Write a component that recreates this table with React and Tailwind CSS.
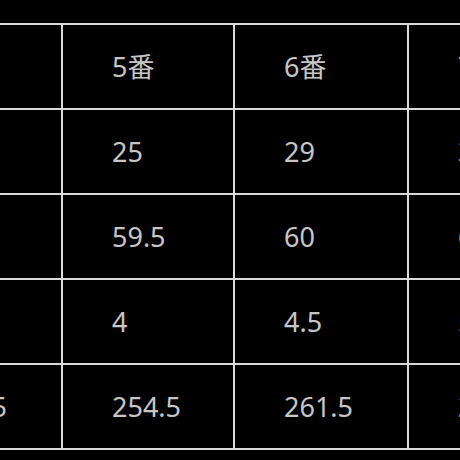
import React from "react";

const header = ["4番", "5番", "6番", "7番"];
const rows = [
  ["20", "25", "29", "33"],
  ["59", "59.5", "60", "60.5"],
  ["3.5", "4", "4.5", "5"],
  ["247.5", "254.5", "261.5", "268.5"],
];

export default function App() {
  return (
    <div
      className="w-[460px] h-[460px] bg-black overflow-hidden pt-[23px]"
      style={{ fontFamily: '"Noto Sans", "Noto Sans CJK JP", sans-serif' }}
    >
      {/* spec table, scrolled sideways */}
      <table className="table-fixed border-collapse w-[694px] min-w-[694px] ml-[-113px] text-[27px] text-[#c6c6c6]">
        <colgroup>
          <col className="w-[174px]" />
          <col className="w-[172px]" />
          <col className="w-[174px]" />
          <col className="w-[174px]" />
        </colgroup>
        <thead>
          <tr>
            {header.map((h) => (
              <th
                key={h}
                className="h-[85px] border-2 border-[#dadada] pl-[49px] text-left font-normal leading-none"
              >
                {h}
              </th>
            ))}
          </tr>
        </thead>
        <tbody>
          {rows.map((r, i) => (
            <tr key={i}>
              {r.map((c, j) => (
                <td
                  key={j}
                  className="h-[85px] border-2 border-[#dadada] pl-[49px] text-left whitespace-nowrap leading-none"
                >
                  {c}
                </td>
              ))}
            </tr>
          ))}
        </tbody>
      </table>
    </div>
  );
}
